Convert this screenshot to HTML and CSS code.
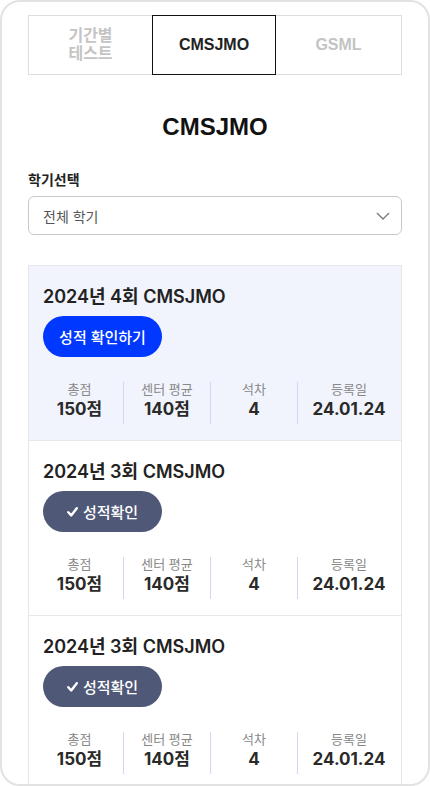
FILE: index.html
```html
<!DOCTYPE html>
<html lang="ko">
<head>
<meta charset="utf-8">
<link rel="stylesheet" href="styles.css">
</head>
<body>
<div class="frame">
  <div class="tabs">
    <div class="tab">기간별<br>테스트</div>
    <div class="tab active">CMSJMO</div>
    <div class="tab">GSML</div>
  </div>
  <h1 class="title">CMSJMO</h1>
  <div class="label">학기선택</div>
  <div class="select">
    <span>전체 학기</span>
    <svg class="chev" width="14" height="8" viewBox="0 0 14 8"><path d="M1 1l6 6 6-6" fill="none" stroke="#777" stroke-width="1.3"/></svg>
  </div>
  <div class="list">
    <div class="item current">
      <div class="item-title">2024년 4회 CMSJMO</div>
      <div class="btn btn-primary">성적 확인하기</div>
      <div class="stats">
        <div class="stat"><div class="s-label">총점</div><div class="s-val">150점</div></div>
        <div class="stat"><div class="s-label">센터 평균</div><div class="s-val">140점</div></div>
        <div class="stat"><div class="s-label">석차</div><div class="s-val">4</div></div>
        <div class="stat"><div class="s-label">등록일</div><div class="s-val">24.01.24</div></div>
      </div>
    </div>
    <div class="item">
      <div class="item-title">2024년 3회 CMSJMO</div>
      <div class="btn btn-done"><svg class="check" width="11" height="10" viewBox="0 0 11 10"><path d="M1.3 5.2l2.9 3.2L9.8 1.2" fill="none" stroke="#fff" stroke-width="2.4" stroke-linecap="round" stroke-linejoin="round"/></svg>성적확인</div>
      <div class="stats">
        <div class="stat"><div class="s-label">총점</div><div class="s-val">150점</div></div>
        <div class="stat"><div class="s-label">센터 평균</div><div class="s-val">140점</div></div>
        <div class="stat"><div class="s-label">석차</div><div class="s-val">4</div></div>
        <div class="stat"><div class="s-label">등록일</div><div class="s-val">24.01.24</div></div>
      </div>
    </div>
    <div class="item">
      <div class="item-title">2024년 3회 CMSJMO</div>
      <div class="btn btn-done"><svg class="check" width="11" height="10" viewBox="0 0 11 10"><path d="M1.3 5.2l2.9 3.2L9.8 1.2" fill="none" stroke="#fff" stroke-width="2.4" stroke-linecap="round" stroke-linejoin="round"/></svg>성적확인</div>
      <div class="stats">
        <div class="stat"><div class="s-label">총점</div><div class="s-val">150점</div></div>
        <div class="stat"><div class="s-label">센터 평균</div><div class="s-val">140점</div></div>
        <div class="stat"><div class="s-label">석차</div><div class="s-val">4</div></div>
        <div class="stat"><div class="s-label">등록일</div><div class="s-val">24.01.24</div></div>
      </div>
    </div>
  </div>
</div>
</body>
</html>
```
FILE: styles.css
```css
* { box-sizing: border-box; }
html, body { margin: 0; padding: 0; background: #fff; }
body {
  font-family: "Inter", "Noto Sans CJK KR", sans-serif;
  color: #222;
}
.frame {
  width: 430px;
  height: 786px;
  border: 2px solid #e2e2e2;
  border-radius: 20px;
  overflow: hidden;
  padding: 13px 26px 0 26px;
}
.tabs {
  display: flex;
  height: 60px;
}
.tab {
  flex: 0 0 124px;
  border: 1px solid #dedede;
  display: flex;
  align-items: center;
  justify-content: center;
  text-align: center;
  font-family: "Liberation Sans", "Noto Sans CJK KR", sans-serif;
  font-weight: 700;
  font-size: 16px;
  line-height: 18px;
  color: #c4c4c4;
}
.tab:first-child { border-right: none; }
.tab:last-child { border-left: none; flex-basis: 126px; }
.tab.active {
  border: 1px solid #111;
  color: #222;
}
.title {
  margin: 0;
  padding-top: 38px;
  height: 95px;
  text-align: center;
  font-family: "Liberation Sans", "Noto Sans CJK KR", sans-serif;
  font-weight: 700;
  font-size: 24px;
  line-height: 28px;
  color: #111;
}
.label {
  font-size: 14px;
  font-weight: 700;
  line-height: 20px;
  color: #222;
}
.select {
  margin-top: 6px;
  height: 39px;
  border: 1px solid #c9c9c9;
  border-radius: 6px;
  display: flex;
  align-items: center;
  justify-content: space-between;
  padding: 0 11px 0 14px;
  font-size: 14px;
  color: #555;
}
.chev { display: block; }
.list {
  margin-top: 30px;
  border: 1px solid #e4e6ea;
  border-bottom: none;
}
.item {
  padding: 18px 15px 16px 14px;
  border-bottom: 1px solid #e7e8eb;
}
.item.current { background: #f1f4fd; }
.item-title {
  font-size: 18px;
  font-weight: 600;
  line-height: 26px;
  color: #222;
}
.btn {
  margin-top: 6px;
  width: 119px;
  height: 41px;
  border-radius: 21px;
  display: flex;
  align-items: center;
  justify-content: center;
  gap: 5px;
  color: #fff;
  font-size: 15px;
  font-weight: 500;
}
.btn-primary { background: #0038ff; }
.btn-done { background: #4f5877; }
.check { display: block; margin-top: 1px; }
.stats {
  margin-top: 25px;
  margin-left: -7px;
  margin-right: -14px;
  display: grid;
  grid-template-columns: 87px 87px 87px 1fr;
}
.stat {
  height: 42px;
  text-align: center;
}
.stat + .stat { border-left: 1px solid #cfd8f3; }
.s-label {
  font-size: 13px;
  line-height: 15px;
  color: #888;
}
.s-val {
  font-size: 17px;
  font-weight: 700;
  line-height: 24px;
  color: #2a2a2a;
}
```
